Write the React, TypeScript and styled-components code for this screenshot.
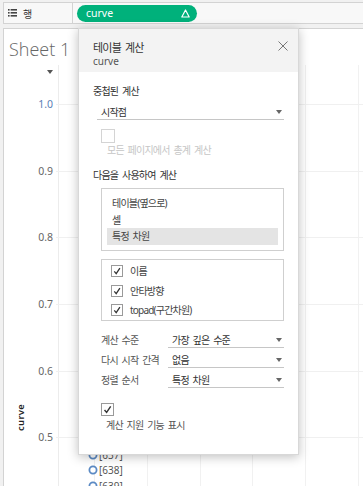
import React from 'react';
import styled, { createGlobalStyle } from 'styled-components';

const GlobalStyle = createGlobalStyle`
  html, body {
    margin: 0;
    padding: 0;
  }
  body {
    background: #f1f1f1;
    font-family: "Noto Sans", "Noto Sans CJK KR", sans-serif;
    color: #333;
  }
  * {
    box-sizing: border-box;
  }
`;

const Frame = styled.div`
  width: 363px;
  height: 486px;
  overflow: hidden;
  display: flex;
  flex-direction: column;
  padding: 2px 0 0 3px;
`;

// 상단 행 선반
const ShelfBar = styled.div`
  display: flex;
  flex: none;
  height: 22px;
  border: 1px solid #d3d3d3;
  border-right: none;
  background: #f8f8f8;
`;

const ShelfLabel = styled.div`
  width: 69px;
  display: flex;
  align-items: center;
  gap: 6px;
  padding-left: 4px;
  border-right: 1px solid #d3d3d3;
  font-size: 10px;
  color: #333;
`;

const PillArea = styled.div`
  display: flex;
  align-items: center;
  padding-left: 4px;
`;

const Pill = styled.div`
  width: 120px;
  height: 17px;
  border-radius: 9px;
  background: #00b17b;
  color: #fff;
  display: flex;
  align-items: center;
  justify-content: space-between;
  padding: 0 7px 0 9px;
  font-size: 10.5px;
`;

const Sheet = styled.div`
  position: relative;
  flex: 1;
  margin-top: 4px;
  border-top: 1px solid #d3d3d3;
  border-left: 1px solid #d3d3d3;
  background: #fff;
`;

const SheetTitle = styled.div`
  padding: 8px 0 0 5px;
  margin-bottom: 4px;
  font-family: "Open Sans", sans-serif;
  font-weight: 300;
  font-size: 18px;
  line-height: 24px;
  color: #666;
`;

const Chart = styled.div`
  display: grid;
  grid-template-columns: 32px 20px 1fr;
  height: 421px;
`;

const AxisTitleCol = styled.div`
  display: flex;
  justify-content: center;
  padding-top: 340px;
`;

const AxisTitle = styled.div`
  writing-mode: vertical-rl;
  transform: rotate(180deg);
  height: 26px;
  font-size: 9.5px;
  font-weight: 600;
  color: #222;
  letter-spacing: 0.3px;
`;

const LabelCol = styled.div`
  display: flex;
  flex-direction: column;
  align-items: flex-end;
  padding-right: 3px;
`;

const SortCaret = styled.div`
  height: 14px;
  display: flex;
  align-items: center;
  &::after {
    content: '';
    border-left: 3px solid transparent;
    border-right: 3px solid transparent;
    border-top: 4px solid #555;
  }
`;

const TickList = styled.div`
  display: flex;
  flex-direction: column;
  align-items: flex-end;
  gap: 52.67px;
  padding-top: 18px;
`;

const Tick = styled.div<{ $active?: boolean }>`
  font-size: 10.5px;
  line-height: 14px;
  color: ${p => (p.$active ? '#5b80b6' : '#666')};
`;

const Plot = styled.svg`
  display: block;
`;

// 테이블 계산 팝업
const Popup = styled.div`
  position: absolute;
  z-index: 10;
  left: 74px;
  top: -1px;
  width: 221px;
  background: #fff;
  border: 1px solid #d8d8d8;
  box-shadow: 0 2px 10px rgba(0, 0, 0, 0.25);
  letter-spacing: -0.8px;
  word-spacing: 2px;
`;

const PopupHeader = styled.div`
  height: 43px;
  background: #f3f3f3;
  display: flex;
  justify-content: space-between;
  align-items: flex-start;
  padding: 12px 10px 0 14px;
`;

const PopupTitle = styled.div`
  font-size: 11px;
  line-height: 14px;
  color: #333;
`;

const PopupSub = styled.div`
  font-size: 10px;
  line-height: 12px;
  color: #555;
  letter-spacing: 0;
`;

const CloseButton = styled.svg`
  display: block;
`;

const PopupBody = styled.div`
  padding: 12px 14px 22px 14px;
  display: flex;
  flex-direction: column;
  align-items: stretch;
  font-size: 10px;
  line-height: 14px;
`;

const SectionLabel = styled.div<{ $gap?: number }>`
  margin-top: ${p => p.$gap ?? 0}px;
  color: #333;
`;

const Select = styled.div<{ $indent?: number }>`
  margin-left: ${p => p.$indent ?? 0}px;
  height: 15px;
  display: flex;
  justify-content: space-between;
  align-items: center;
  padding: 0 2px 0 4px;
  border-bottom: 1px solid #c6c6c6;
  color: #333;
  &::after {
    content: '';
    border-left: 3px solid transparent;
    border-right: 3px solid transparent;
    border-top: 4px solid #666;
  }
`;

const StartSelect = styled(Select)`
  margin-top: 7px;
`;

const Box = styled.div<{ $size: number; $disabled?: boolean }>`
  width: ${p => p.$size}px;
  height: ${p => p.$size}px;
  border: 1px solid ${p => (p.$disabled ? '#d4d4d4' : '#9a9a9a')};
  background: #fff;
  display: flex;
  align-items: center;
  justify-content: center;
  flex: none;
`;

const StackedCheck = styled.div<{ $gap: number }>`
  margin: ${p => p.$gap}px 0 0 8px;
`;

const CheckCaption = styled.div<{ $disabled?: boolean }>`
  margin-left: ${p => (p.$disabled ? 14 : 13)}px;
  margin-top: ${p => (p.$disabled ? 0 : 1.5)}px;
  color: ${p => (p.$disabled ? '#c6c6c6' : '#555')};
`;

const ListBox = styled.div`
  margin: 6px 0 0 8px;
  border: 1px solid #cfcfcf;
  padding: 6px 5px 5px;
`;

const ListItem = styled.div<{ $selected?: boolean }>`
  height: 16.5px;
  line-height: 16.5px;
  padding-left: 5px;
  color: #444;
  background: ${p => (p.$selected ? '#e4e4e4' : 'transparent')};
`;

const CheckGroup = styled.div`
  margin: 8px 0 0 8px;
  border: 1px solid #cfcfcf;
  padding: 2px 0 0 9px;
`;

const CheckRow = styled.div`
  height: 19.5px;
  display: flex;
  align-items: center;
  gap: 7px;
  color: #444;
`;

const OptionGrid = styled.div`
  margin: 8.5px 0 0 8px;
  display: grid;
  grid-template-columns: 67px 1fr;
  grid-auto-rows: 20px;
`;

const OptionLabel = styled.div`
  padding-top: 3px;
  color: #555;
  white-space: nowrap;
`;

const OptionSelect = styled(Select)`
  margin-top: 3px;
`;

const ListIcon = () => (
  <svg width="9" height="8" viewBox="0 0 9 8">
    {[0.5, 3.5, 6.5].map(y => (
      <g key={y} fill="#444">
        <rect x="0" y={y - 0.5} width="1.6" height="1.6" />
        <rect x="2.6" y={y - 0.5} width="6.4" height="1.6" />
      </g>
    ))}
  </svg>
);

const DeltaIcon = () => (
  <svg width="9" height="9" viewBox="0 0 9 9">
    <path d="M4.5 1 L8.2 8 L0.8 8 Z" fill="none" stroke="#fff" strokeWidth="1.2" strokeLinejoin="round" />
  </svg>
);

const CheckMark = ({ size = 12 }: { size?: number }) => (
  <svg width={size - 2} height={size - 2} viewBox="0 0 10 10">
    <path d="M2.3 5.4 L4.2 7.6 L7.9 2.2" fill="none" stroke="#333" strokeWidth="1.3" />
  </svg>
);

const ticks = ['1.0', '0.9', '0.8', '0.7', '0.6', '0.5'];
const gridX = [38.5, 91.5, 144.5, 196.5, 249.5, 302.5];
const marks = [
  { y: 390, label: '[637]' },
  { y: 405, label: '[638]' },
  { y: 421, label: '[639]' },
];

const options = [
  { label: '계산 수준', value: '가장 깊은 수준' },
  { label: '다시 시작 간격', value: '없음' },
  { label: '정렬 순서', value: '특정 차원' },
];

const App = () => {
  return (
    <Frame>
      <GlobalStyle />
      <ShelfBar>
        <ShelfLabel>
          <ListIcon />
          <span>행</span>
        </ShelfLabel>
        <PillArea>
          <Pill>
            <span>curve</span>
            <DeltaIcon />
          </Pill>
        </PillArea>
      </ShelfBar>

      <Sheet>
        <SheetTitle>Sheet 1</SheetTitle>
        <Chart>
          <AxisTitleCol>
            <AxisTitle>curve</AxisTitle>
          </AxisTitleCol>
          <LabelCol>
            <SortCaret />
            <TickList>
              {ticks.map((t, i) => (
                <Tick key={t} $active={i === 0}>{t}</Tick>
              ))}
            </TickList>
          </LabelCol>
          <Plot width="307" height="421" viewBox="0 0 307 421">
            <line x1="2.5" y1="0" x2="2.5" y2="421" stroke="#ececec" />
            {gridX.map(x => (
              <line key={x} x1={x} y1="0" x2={x} y2="421" stroke="#f1f1f1" />
            ))}
            {ticks.map((t, i) => {
              const y = Math.round(39 + i * 66.67) + 0.5;
              return <line key={t} x1="0" y1={y} x2="307" y2={y} stroke="#f0f0f0" />;
            })}
            {marks.map(m => (
              <g key={m.label}>
                <circle cx="37" cy={m.y} r="3.6" fill="#fff" stroke="#5b8ac4" strokeWidth="1.8" />
                <text x="43" y={m.y + 3.5} fontSize="10" fill="#555" fontFamily="Noto Sans, sans-serif">
                  {m.label}
                </text>
              </g>
            ))}
          </Plot>
        </Chart>

        <Popup>
          <PopupHeader>
            <div>
              <PopupTitle>테이블 계산</PopupTitle>
              <PopupSub>curve</PopupSub>
            </div>
            <CloseButton width="10" height="10" viewBox="0 0 10 10">
              <path d="M0.5 0.5 L9.5 9.5 M9.5 0.5 L0.5 9.5" stroke="#777" strokeWidth="1" />
            </CloseButton>
          </PopupHeader>

          <PopupBody>
            <SectionLabel>중첩된 계산</SectionLabel>
            <StartSelect $indent={4}>시작점</StartSelect>
            <StackedCheck $gap={9}>
              <Box $size={14} $disabled />
            </StackedCheck>
            <CheckCaption $disabled>모든 페이지에서 총계 계산</CheckCaption>

            <SectionLabel $gap={11}>다음을 사용하여 계산</SectionLabel>
            <ListBox>
              <ListItem>테이블(옆으로)</ListItem>
              <ListItem>셀</ListItem>
              <ListItem $selected>특정 차원</ListItem>
            </ListBox>

            <CheckGroup>
              {['이름', '안타방향', 'topad(구간차원)'].map(name => (
                <CheckRow key={name}>
                  <Box $size={12}>
                    <CheckMark />
                  </Box>
                  <span>{name}</span>
                </CheckRow>
              ))}
            </CheckGroup>

            <OptionGrid>
              {options.map(o => (
                <React.Fragment key={o.label}>
                  <OptionLabel>{o.label}</OptionLabel>
                  <OptionSelect>{o.value}</OptionSelect>
                </React.Fragment>
              ))}
            </OptionGrid>

            <StackedCheck $gap={13.5}>
              <Box $size={13}>
                <CheckMark size={13} />
              </Box>
            </StackedCheck>
            <CheckCaption>계산 지원 기능 표시</CheckCaption>
          </PopupBody>
        </Popup>
      </Sheet>
    </Frame>
  );
};

export default App;
